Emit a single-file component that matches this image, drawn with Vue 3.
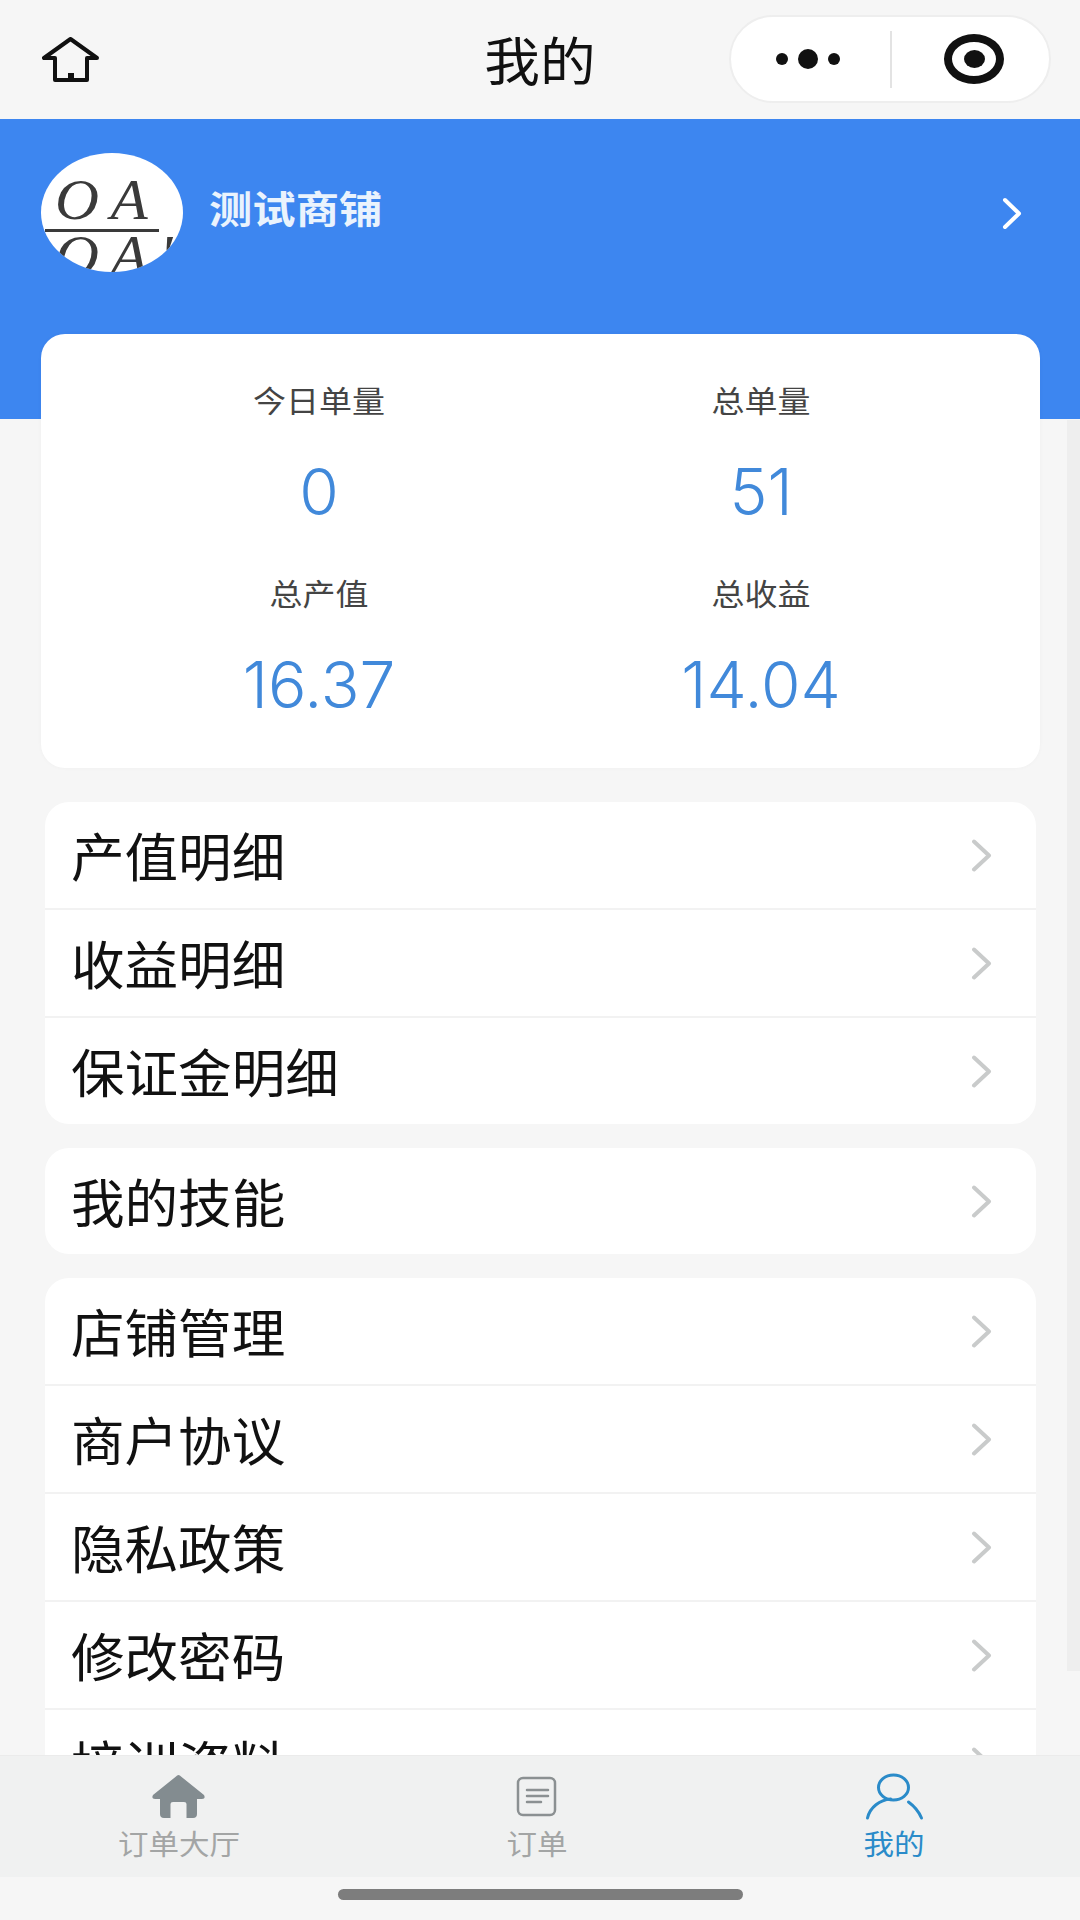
<template>
    <div class="page">
        <header class="nav">
            <svg class="nav-home" viewBox="0 0 57 46" fill="none" stroke="#111" stroke-width="4" stroke-linejoin="round">
                <path d="M28.5 2 L2 21 H13 V43 H45 V21 H55 Z" />
                <path d="M29 43 V36" stroke-width="6" />
            </svg>
            <div class="nav-title">我的</div>
            <div class="capsule">
                <div class="capsule-dots">
                    <span class="dot"></span>
                    <span class="dot dot-big"></span>
                    <span class="dot"></span>
                </div>
                <div class="capsule-line"></div>
                <div class="capsule-target">
                    <span class="target-core"></span>
                </div>
            </div>
        </header>

        <main class="scroll">
            <div class="scrollbar"></div>
            <section class="hero">
                <div class="avatar">
                    <div class="frac frac-top">OA</div>
                    <div class="frac-line"></div>
                    <div class="frac frac-bottom">OA'</div>
                </div>
                <div class="shop-name">测试商铺</div>
                <svg class="hero-arrow" viewBox="0 0 20 33" fill="none" stroke="#fff" stroke-width="4" stroke-linecap="round" stroke-linejoin="round">
                    <path d="M3 3 L17 16.5 L3 30" />
                </svg>
            </section>

            <section class="stats">
                <div v-for="stat in stats" :key="stat.label" class="stat">
                    <div class="stat-label">{{ stat.label }}</div>
                    <div class="stat-value">{{ stat.value }}</div>
                </div>
            </section>

            <section v-for="(group, index) in menuGroups" :key="index" class="menu">
                <div v-for="item in group" :key="item" class="menu-row">
                    <span class="menu-text">{{ item }}</span>
                    <svg class="menu-arrow" viewBox="0 0 21 33" fill="none" stroke="#c9cbcb" stroke-width="4" stroke-linecap="round" stroke-linejoin="round">
                        <path d="M3 2.5 L18 16.5 L3 30.5" />
                    </svg>
                </div>
            </section>
        </main>

        <nav class="tabbar">
            <div class="tab">
                <svg class="tab-icon" viewBox="0 0 57 48">
                    <path fill="#838c90" d="M28.5 0 Q30 0 31 1.5 L54 20 Q56 24 52 24 H47 V39 Q47 43 43 43 H36.5 V29 Q36.5 27 34 27 H23 Q20.5 27 20.5 29 V43 H14 Q10 43 10 39 V24 H5 Q1 24 3 20 L26 1.5 Q27 0 28.5 0 Z" />
                </svg>
                <span class="tab-label">订单大厅</span>
            </div>
            <div class="tab">
                <svg class="tab-icon" viewBox="0 0 57 48" fill="none" stroke="#8b9092" stroke-width="2.5" stroke-linecap="round">
                    <rect x="10" y="3" width="37" height="37" rx="5" />
                    <path d="M19 15 H40 M19 21 H40 M19 27 H33" />
                </svg>
                <span class="tab-label">订单</span>
            </div>
            <div class="tab tab-active">
                <svg class="tab-icon" viewBox="0 0 57 48" fill="none" stroke="#2a8bc9" stroke-width="3" stroke-linecap="round">
                    <ellipse cx="27.5" cy="12.5" rx="15" ry="12.5" />
                    <path d="M24.5 24 C14 25 4 32 1.5 43 M42.5 27 C48 31 53 37 55.5 43" />
                </svg>
                <span class="tab-label">我的</span>
            </div>
        </nav>

        <div class="home-area">
            <div class="home-bar"></div>
        </div>
    </div>
</template>

<script setup>
const stats = [
    { label: '今日单量', value: '0' },
    { label: '总单量', value: '51' },
    { label: '总产值', value: '16.37' },
    { label: '总收益', value: '14.04' },
];

const menuGroups = [
    ['产值明细', '收益明细', '保证金明细'],
    ['我的技能'],
    ['店铺管理', '商户协议', '隐私政策', '修改密码', '培训资料'],
];
</script>

<style>
html,
body {
    margin: 0;
    background: #f6f6f6;
}
</style>

<style scoped>
.page {
    display: flex;
    flex-direction: column;
    width: 1080px;
    height: 1920px;
    overflow: hidden;
    background: #f6f6f6;
    font-family: "Noto Sans CJK SC", "Noto Sans", sans-serif;
}

.nav {
    position: relative;
    flex: none;
    display: flex;
    align-items: center;
    justify-content: center;
    height: 119px;
    background: #f6f6f6;
}

.nav-home {
    position: absolute;
    left: 42px;
    top: 37px;
    width: 57px;
    height: 46px;
}

.nav-title {
    font-size: 52px;
    line-height: 1;
    color: #111;
    margin-top: -2px;
    transform: scaleX(1.07);
}

.capsule {
    position: absolute;
    left: 729px;
    top: 15px;
    display: flex;
    align-items: center;
    width: 322px;
    height: 88px;
    box-sizing: border-box;
    border: 2px solid #eeeeee;
    border-radius: 44px;
    background: #fff;
}

.capsule-dots {
    display: flex;
    align-items: center;
    justify-content: center;
    gap: 10px;
    width: 154px;
    margin-right: 5px;
}

.dot {
    width: 12px;
    height: 12px;
    border-radius: 50%;
    background: #111;
}

.dot-big {
    width: 20px;
    height: 20px;
}

.capsule-line {
    width: 2px;
    height: 57px;
    background: #e3e3e3;
}

.capsule-target {
    display: flex;
    align-items: center;
    justify-content: center;
    width: 60px;
    height: 50px;
    margin-left: 52px;
    box-sizing: border-box;
    border: 8px solid #111;
    border-radius: 50%;
}

.target-core {
    width: 21px;
    height: 18px;
    border-radius: 50%;
    background: #111;
}

.scroll {
    position: relative;
    flex: 1;
    min-height: 0;
    overflow: hidden;
}

.scrollbar {
    position: absolute;
    top: 301px;
    right: 0;
    width: 13px;
    height: 1251px;
    background: #eeeeee;
}

.hero {
    position: relative;
    display: flex;
    align-items: flex-start;
    height: 300px;
    box-sizing: border-box;
    padding: 34px 58px 0 41px;
    background: #3d86f0;
}

.avatar {
    flex: none;
    position: relative;
    width: 142px;
    height: 119px;
    overflow: hidden;
    border-radius: 50%;
    background: #fff;
    color: #3a3a3a;
    font-family: "Liberation Serif", serif;
    font-style: italic;
}

.frac {
    position: absolute;
    left: 14px;
    font-size: 58px;
    line-height: 50px;
    letter-spacing: 11px;
    white-space: nowrap;
    transform: scaleX(1.05);
    transform-origin: left center;
}

.frac-top {
    top: 22px;
}

.frac-bottom {
    top: 78px;
}

.frac-line {
    position: absolute;
    left: 4px;
    right: 24px;
    top: 76px;
    height: 3px;
    background: #3a3a3a;
}

.shop-name {
    margin: 28px 0 0 26px;
    font-size: 38px;
    line-height: 52px;
    font-weight: 700;
    color: #eaf3fd;
    transform: scaleX(1.14);
    transform-origin: left center;
}

.hero-arrow {
    width: 20px;
    height: 33px;
    margin: 44px 0 0 auto;
}

.stats {
    position: relative;
    display: grid;
    grid-template-columns: 1fr 1fr;
    align-content: start;
    margin: -85px 40px 0 41px;
    padding: 26px 58px 0 57px;
    height: 434px;
    box-sizing: border-box;
    border-radius: 24px;
    background: #fff;
    box-shadow: 0 0 4px rgba(0, 0, 0, 0.03);
}

.stat {
    display: flex;
    flex-direction: column;
    align-items: center;
    height: 193px;
}

.stat-label {
    margin-top: 17px;
    font-size: 30px;
    line-height: 44px;
    color: #444;
    transform: scaleX(1.1);
}

.stat-value {
    margin-top: 29px;
    font-family: Inter, "Open Sans", sans-serif;
    font-size: 64px;
    font-weight: 300;
    line-height: 84px;
    color: #4189da;
}

.menu {
    position: relative;
    margin: 24px 44px 0 45px;
    border-radius: 24px;
    background: #fff;
    overflow: hidden;
}

.stats + .menu {
    margin-top: 34px;
}

.menu-row {
    display: flex;
    align-items: center;
    justify-content: space-between;
    height: 106px;
    padding: 0 44px 0 26px;
    border-bottom: 2px solid #f2f2f2;
}

.menu-row:last-child {
    border-bottom: none;
}

.menu-text {
    font-size: 52px;
    line-height: 1;
    color: #111;
    transform: scaleX(1.03);
    transform-origin: left center;
}

.menu-arrow {
    flex: none;
    width: 21px;
    height: 33px;
}

.tabbar {
    position: relative;
    flex: none;
    display: flex;
    height: 122px;
    padding-right: 7px;
    background: #f0f1f1;
    border-top: 1px solid #ebebeb;
    box-sizing: border-box;
}

.tab {
    flex: 1;
    display: flex;
    flex-direction: column;
    align-items: center;
    padding-top: 19px;
    box-sizing: border-box;
}

.tab-icon {
    width: 57px;
    height: 48px;
    overflow: visible;
}

.tab-label {
    margin-top: 2px;
    font-size: 28px;
    line-height: 36px;
    color: #a3a5a5;
    transform: scaleX(1.09);
}

.tab-active .tab-label {
    color: #2a8bc9;
}

.home-area {
    flex: none;
    display: flex;
    justify-content: center;
    height: 43px;
    padding-top: 12px;
    box-sizing: border-box;
}

.home-bar {
    width: 405px;
    height: 11px;
    border-radius: 6px;
    background: #7d7d7d;
}
</style>
